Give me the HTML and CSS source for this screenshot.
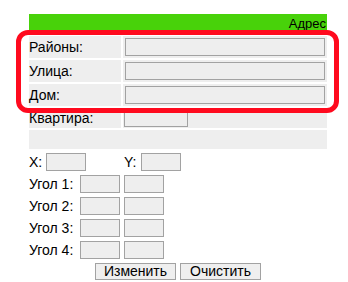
FILE: index.html
```html
<!DOCTYPE html>
<html lang="ru">
<head>
<meta charset="utf-8">
<title>Адрес</title>
<link rel="stylesheet" href="styles.css">
</head>
<body>
<div class="form">
  <div class="head">Адрес</div>
  <div class="grid">
    <div class="lbl">Районы:</div><div class="fld"><input class="inp wide"></div>
    <div class="lbl">Улица:</div><div class="fld"><input class="inp wide"></div>
    <div class="lbl">Дом:</div><div class="fld"><input class="inp wide"></div>
    <div class="lbl short">Квартира:</div><div class="fld short"><input class="inp flat"></div>
    <div class="blank"></div>
  </div>
  <div class="coords">
    <div class="row"><span class="xy">X:</span><input class="inp small"><span class="xy ylbl">Y:</span><input class="inp small"></div>
    <div class="row"><span class="angle">Угол 1:</span><input class="inp small"><input class="inp small second"></div>
    <div class="row"><span class="angle">Угол 2:</span><input class="inp small"><input class="inp small second"></div>
    <div class="row"><span class="angle">Угол 3:</span><input class="inp small"><input class="inp small second"></div>
    <div class="row"><span class="angle">Угол 4:</span><input class="inp small"><input class="inp small second"></div>
    <div class="buttons"><button class="btn">Изменить</button><button class="btn">Очистить</button></div>
  </div>
</div>
<div class="highlight"></div>
</body>
</html>
```
FILE: styles.css
```css
html, body {
  margin: 0;
  padding: 0;
  background: #fff;
}
body {
  font-family: "Liberation Sans", Arial, sans-serif;
  font-size: 14px;
  color: #000;
  position: relative;
  width: 348px;
  height: 282px;
  overflow: hidden;
}
.form {
  padding: 14px 0 0 29px;
  width: 298px;
}
.head {
  height: 16px;
  background: #48d20a;
  font-size: 13px;
  line-height: 1;
  display: flex;
  justify-content: flex-end;
  align-items: flex-end;
  padding-right: 1px;
  margin-bottom: 6px;
}
.grid {
  display: grid;
  grid-template-columns: 92px 204px;
  grid-template-rows: 22px 22px 22px 20px 19px;
  gap: 2px;
}
.lbl, .fld, .blank {
  background: #eeeeee;
  display: flex;
  align-items: center;
}
.lbl {
  line-height: 16px;
}
.blank {
  grid-column: 1 / span 2;
}
.inp {
  box-sizing: border-box;
  margin: 0;
  padding: 0;
  background: #eeeeee;
  border: 1px solid #a2a2a2;
  font: inherit;
}
.wide {
  width: 200px;
  height: 18px;
  margin-left: 2px;
}
.flat {
  width: 64px;
  height: 17px;
  margin-left: 1px;
}
.coords {
  margin-top: 2px;
}
.row {
  height: 22px;
  display: flex;
  align-items: center;
}
.small {
  width: 40px;
  height: 18px;
}
.second {
  margin-left: 4px;
}
.xy {
  width: 17px;
}
.ylbl {
  margin-left: 38px;
}
.angle {
  width: 51px;
}
.buttons {
  height: 22px;
  display: flex;
  align-items: flex-start;
  padding-top: 2px;
  box-sizing: border-box;
  padding-left: 66px;
  gap: 4px;
}
.btn {
  box-sizing: border-box;
  width: 81px;
  height: 17px;
  margin: 0;
  padding: 0;
  font: inherit;
  line-height: 15px;
  color: #000;
  background: #efefef;
  border: 1px solid #a2a2a2;
  border-radius: 0;
}
.highlight {
  position: absolute;
  left: 16px;
  top: 30px;
  width: 323px;
  height: 83px;
  box-sizing: border-box;
  border: 5px solid #ff0a1e;
  border-radius: 12px;
  pointer-events: none;
}
```
